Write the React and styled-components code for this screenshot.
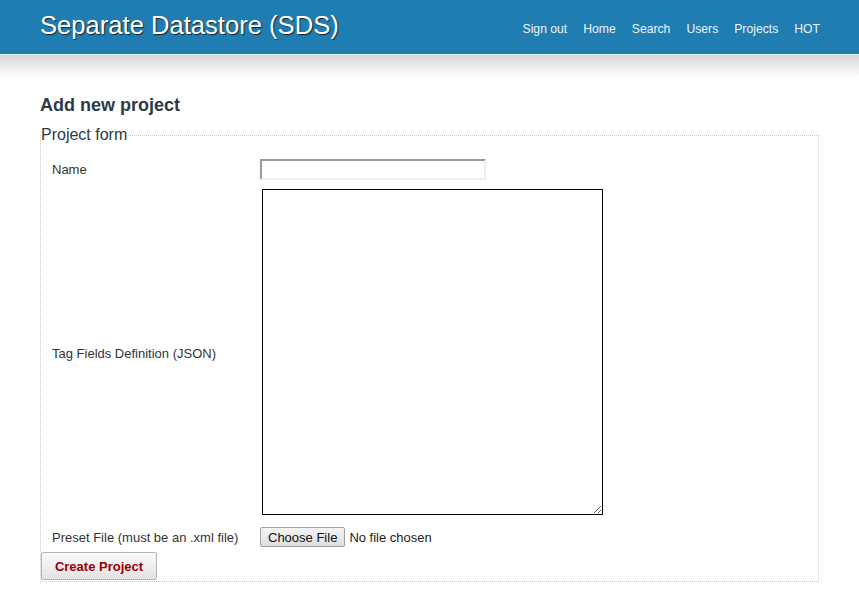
import React from "react";
import styled, { createGlobalStyle } from "styled-components";

const GlobalStyle = createGlobalStyle`
  body {
    margin: 0;
    background: #fff;
    font-family: "Liberation Sans", Arial, sans-serif;
    color: #333;
  }
`;

const links = ["Sign out", "Home", "Search", "Users", "Projects", "HOT"];

function App() {
  return (
    <>
      <GlobalStyle />
      <Header>
        <Title>Separate Datastore (SDS)</Title>
        <Nav>
          {links.map((l) => (
            <NavLink key={l} href="#">{l}</NavLink>
          ))}
        </Nav>
      </Header>
      <Shadow />
      <Main>
        <Heading>Add new project</Heading>
        <Fieldset>
          <Legend>Project form</Legend>
          <FormTable>
            <tbody>
              <tr>
                <LabelCell>Name</LabelCell>
                <FieldCell>
                  <TextInput type="text" />
                </FieldCell>
              </tr>
              <tr>
                <LabelCell $top={8}>Tag Fields Definition (JSON)</LabelCell>
                <FieldCell>
                  <TextArea />
                </FieldCell>
              </tr>
              <tr>
                <LabelCell $top={8}>Preset File (must be an .xml file)</LabelCell>
                <FieldCell $top={8}>
                  <FilePicker>
                    <FileButton type="button">Choose File</FileButton>
                    <FileName>No file chosen</FileName>
                  </FilePicker>
                </FieldCell>
              </tr>
            </tbody>
          </FormTable>
          <SubmitButton type="button">Create Project</SubmitButton>
        </Fieldset>
      </Main>
    </>
  );
}

export default App;

const Header = styled.header`
  height: 54px;
  background-color: #207db2;
  border-bottom: 1px solid #e4eef4;
  display: flex;
  align-items: center;
  justify-content: space-between;
  padding: 0 39px 0 40px;
`;

const Shadow = styled.div`
  height: 22px;
  background: linear-gradient(to bottom, #d6d6d6, #ffffff);
`;

const Title = styled.h1`
  margin: 0 0 3px;
  font-size: 25.6px;
  font-weight: normal;
  color: #fff;
  text-shadow: 1px 1px 1px #222;
`;

const Nav = styled.nav`
  display: flex;
  gap: 16px;
  margin-top: 3px;
`;

const NavLink = styled.a`
  color: #eef4fa;
  font-size: 12.2px;
  text-decoration: none;
`;

const Main = styled.main`
  padding: 18px 40px 0;
`;

const Heading = styled.h2`
  margin: 0 0 10px;
  font-size: 18px;
  font-weight: bold;
  color: #2b3a48;
`;

const Fieldset = styled.fieldset`
  margin: 0;
  padding: 0 0 1px;
  border: 1px dotted #c8c8c8;
  min-width: 0;
`;

const Legend = styled.legend`
  padding: 0;
  font-size: 16px;
  color: #2b3a48;
`;

const FormTable = styled.table`
  border-collapse: separate;
  border-spacing: 0;
  margin: 11px 0 0 0;
`;

const LabelCell = styled.td`
  padding: ${(p) => p.$top || 4}px 20px 4px 11px;
  width: 188px;
  font-size: 13px;
  color: #333;
  vertical-align: middle;
`;

const FieldCell = styled.td`
  padding: ${(p) => p.$top || 4}px 0 4px;
  vertical-align: middle;
`;

const TextInput = styled.input`
  display: block;
  box-sizing: border-box;
  width: 226px;
  height: 21px;
  margin: 0;
  border: 2px solid;
  border-color: #999 #eee #eee #999;
  background: #fff;
  font-family: inherit;
  font-size: 13px;
`;

const TextArea = styled.textarea`
  display: block;
  box-sizing: border-box;
  width: 341px;
  height: 326px;
  margin: 1px 0 0 2px;
  border: 1px solid #000;
  font-family: inherit;
  font-size: 13px;
`;

const FilePicker = styled.div`
  display: flex;
  align-items: center;
  gap: 4px;
  font-size: 13px;
`;

const FileButton = styled.button`
  height: 20px;
  padding: 0 7px;
  margin: 0;
  border: 1px solid #a0a0a0;
  border-radius: 2px;
  background: linear-gradient(to bottom, #f4f4f4, #dedede);
  color: #111;
  font-family: inherit;
  font-size: 13px;
`;

const FileName = styled.span`
  color: #222;
`;

const SubmitButton = styled.button`
  display: block;
  width: 116px;
  height: 28px;
  margin: 1px 0 0;
  border: 1px solid #b4b4b4;
  border-radius: 2px;
  background: linear-gradient(to bottom, #fbfbfb, #e2e2e2);
  color: #990000;
  font-family: inherit;
  font-size: 13px;
  font-weight: bold;
`;
